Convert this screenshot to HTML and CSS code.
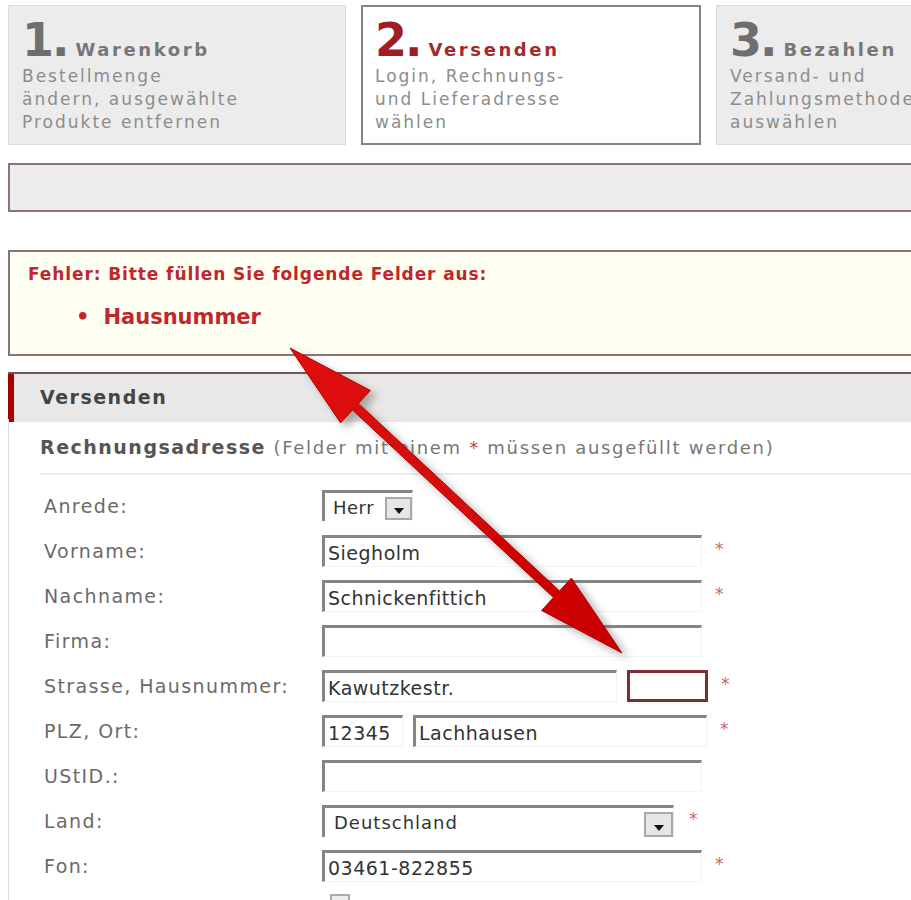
FILE: index.html
```html
<!DOCTYPE html>
<html lang="de">
<head>
    <meta charset="UTF-8">
    <meta name="viewport" content="width=device-width, initial-scale=1.0">
    <title>Versenden</title>
    <link rel="stylesheet" href="styles.css">
</head>
<body>
    <div class="page">
        <div class="steps">
            <div class="step">
                <div class="step-head"><span class="step-num">1.</span><span class="step-title">Warenkorb</span></div>
                <div class="step-desc">Bestellmenge<br>ändern, ausgewählte<br>Produkte entfernen</div>
            </div>
            <div class="step active">
                <div class="step-head"><span class="step-num">2.</span><span class="step-title">Versenden</span></div>
                <div class="step-desc">Login, Rechnungs-<br>und Lieferadresse<br>wählen</div>
            </div>
            <div class="step">
                <div class="step-head"><span class="step-num">3.</span><span class="step-title">Bezahlen</span></div>
                <div class="step-desc">Versand- und<br>Zahlungsmethode<br>auswählen</div>
            </div>
        </div>

        <div class="bar"></div>

        <div class="error">
            <div class="error-title">Fehler: Bitte füllen Sie folgende Felder aus:</div>
            <ul class="error-list">
                <li>Hausnummer</li>
            </ul>
        </div>

        <div class="panel">
            <div class="panel-head">Versenden</div>
            <div class="panel-body">
                <div class="subtitle"><b>Rechnungsadresse</b> (Felder mit einem <span class="req">*</span> müssen ausgefüllt werden)</div>

                <div class="form">
                    <div class="row">
                        <label>Anrede:</label>
                        <div class="select small"><span>Herr</span><span class="select-btn"></span></div>
                    </div>
                    <div class="row">
                        <label>Vorname:</label>
                        <input class="field" type="text" value="Siegholm"><span class="star">*</span>
                    </div>
                    <div class="row">
                        <label>Nachname:</label>
                        <input class="field" type="text" value="Schnickenfittich"><span class="star">*</span>
                    </div>
                    <div class="row">
                        <label>Firma:</label>
                        <input class="field" type="text" value="">
                    </div>
                    <div class="row">
                        <label>Strasse, Hausnummer:</label>
                        <input class="field street" type="text" value="Kawutzkestr.">
                        <input class="field house invalid" type="text" value=""><span class="star">*</span>
                    </div>
                    <div class="row">
                        <label>PLZ, Ort:</label>
                        <input class="field zip" type="text" value="12345">
                        <input class="field city" type="text" value="Lachhausen"><span class="star">*</span>
                    </div>
                    <div class="row">
                        <label>UStID.:</label>
                        <input class="field" type="text" value="">
                    </div>
                    <div class="row">
                        <label>Land:</label>
                        <div class="select wide"><span>Deutschland</span><span class="select-btn"></span></div><span class="star land-star">*</span>
                    </div>
                    <div class="row">
                        <label>Fon:</label>
                        <input class="field" type="text" value="03461-822855"><span class="star">*</span>
                    </div>
                    <div class="row">
                        <label>Lieferadresse:</label>
                        <span class="check"></span>
                    </div>
                </div>
            </div>
        </div>

        <svg class="arrow" width="911" height="900" viewBox="0 0 911 900">
            <defs>
                <filter id="shadow" x="-20%" y="-20%" width="140%" height="140%">
                    <feDropShadow dx="6" dy="5" stdDeviation="4" flood-color="#555" flood-opacity="0.45"/>
                </filter>
                <linearGradient id="red" x1="0" y1="0" x2="1" y2="1">
                    <stop offset="0" stop-color="#e01010"/>
                    <stop offset="1" stop-color="#c80000"/>
                </linearGradient>
            </defs>
            <polygon filter="url(#shadow)" fill="url(#red)" stroke="#b00000" stroke-width="1"
                points="290,348 370.4,390.5 358.5,403.4 559.5,591 571.4,578.1 622,653 541.6,610.5 553.5,597.6 352.5,410 340.6,422.9"/>
        </svg>
    </div>
</body>
</html>
```

FILE: styles.css
```css
body {
    margin: 0;
    background-color: #fff;
    font-family: "DejaVu Sans", Verdana, sans-serif;
    overflow: hidden;
}
.page {
    position: relative;
    width: 1000px;
    padding-left: 8px;
}

/* steps */
.steps {
    display: flex;
    gap: 15px;
    padding-top: 5px;
}
.step {
    flex: none;
    width: 338px;
    height: 140px;
    box-sizing: border-box;
    background-color: #ececec;
    border: 1px solid #dcdcdc;
    padding: 11px 0 0 13px;
}
.step.active {
    width: 340px;
    background-color: #fff;
    border: 2px solid #8e8080;
    padding: 10px 0 0 12px;
}
.step-head {
    display: flex;
    align-items: baseline;
    line-height: 46px;
    height: 46px;
}
.step-num {
    font-size: 46px;
    font-weight: bold;
    color: #6e6e6e;
    letter-spacing: -2px;
    margin-right: 8px;
}
.step-title {
    font-size: 18px;
    font-weight: bold;
    color: #777;
    letter-spacing: 2.6px;
}
.active .step-num {
    color: #a01c22;
}
.active .step-title {
    color: #a52a2a;
}
.step-desc {
    margin-top: 2px;
    font-size: 17px;
    line-height: 23px;
    letter-spacing: 2px;
    color: #8c8c8c;
}

.bar {
    margin-top: 18px;
    height: 49px;
    box-sizing: border-box;
    background-color: #ececec;
    border: 2px solid #8a7373;
}

/* error box */
.error {
    margin-top: 38px;
    height: 106px;
    box-sizing: border-box;
    background-color: #fffff2;
    border: 2px solid #8a7373;
    padding: 12px 0 0 18px;
    color: #c0262c;
    font-weight: bold;
}
.error-title {
    font-size: 17px;
    line-height: 20px;
    letter-spacing: 0.9px;
}
.error-list {
    list-style: none;
    margin: 21px 0 0 0;
    padding: 0 0 0 48px;
}
.error-list li {
    font-size: 21px;
    line-height: 24px;
}
.error-list li::before {
    content: "•";
    margin-right: 14px;
}

/* panel */
.panel {
    margin-top: 16px;
    border-top: 2px solid #6f5a5a;
}
.panel-head {
    height: 48px;
    line-height: 46px;
    background-color: #e8e8e8;
    border-left: 6px solid #a40000;
    padding-left: 26px;
    font-size: 19px;
    font-weight: bold;
    letter-spacing: 1.5px;
    color: #444;
}
.panel-body {
    border-left: 1px solid #dedede;
    margin-top: -3px;
    padding-top: 3px;
}
.subtitle {
    margin-left: 31px;
    height: 51px;
    line-height: 50px;
    border-bottom: 2px solid #eeeeee;
    font-size: 18px;
    letter-spacing: 1.7px;
    color: #777;
}
.subtitle b {
    font-size: 19px;
    letter-spacing: 1.5px;
    color: #555;
}
.req {
    color: #c44;
}

/* form */
.form {
    padding: 8px 0 0 35px;
}
.row {
    display: flex;
    align-items: center;
    height: 45px;
}
.row label {
    width: 278px;
    flex: none;
    white-space: nowrap;
    font-size: 19px;
    letter-spacing: 1.4px;
    color: #6a6a6a;
}
.field {
    width: 380px;
    height: 32px;
    box-sizing: border-box;
    margin: 0;
    padding: 3px 0 0 3px;
    border-top: 3px solid #858585;
    border-left: 3px solid #858585;
    border-right: 1px solid #f2f2f2;
    border-bottom: 1px solid #f4f4f4;
    font-family: "DejaVu Sans", Verdana, sans-serif;
    font-size: 19px;
    letter-spacing: 0.5px;
    color: #333;
    background-color: #fff;
    outline: none;
}
.field.street {
    width: 295px;
}
.field.house {
    width: 81px;
    margin-left: 10px;
}
.field.invalid {
    border: 3px solid #7d2f35;
}
.field.zip {
    width: 81px;
}
.field.city {
    width: 294px;
    margin-left: 10px;
}
.star {
    margin-left: 13px;
    margin-top: -4px;
    font-size: 17px;
    color: #c66;
}
.land-star {
    margin-left: 15px;
}

.select {
    display: flex;
    align-items: center;
    justify-content: space-between;
    height: 31px;
    box-sizing: border-box;
    border-top: 3px solid #858585;
    border-left: 3px solid #858585;
    border-right: 1px solid #eee;
    padding: 0 0 0 8px;
    font-size: 18px;
    letter-spacing: 0.5px;
    color: #333;
}
.select.small {
    width: 91px;
}
.select.wide {
    width: 352px;
    height: 32px;
    padding-left: 9px;
    letter-spacing: 1px;
}
.select-btn {
    position: relative;
    width: 27px;
    height: 23px;
    box-sizing: border-box;
    background-color: #e6e6e6;
    border: 2px solid #a8a8a8;
    margin-top: 2px;
}
.select.wide .select-btn {
    width: 29px;
    height: 25px;
    margin-top: 4px;
}
.select-btn::after {
    content: "";
    position: absolute;
    left: 50%;
    bottom: 4px;
    margin-left: -5px;
    border-left: 5px solid transparent;
    border-right: 5px solid transparent;
    border-top: 6px solid #111;
}
.check {
    display: inline-block;
    width: 20px;
    height: 20px;
    margin-left: 8px;
    margin-top: -14px;
    box-sizing: border-box;
    border: 2px solid #aaa;
    background-color: #eee;
}

.arrow {
    position: absolute;
    top: 0;
    left: 0;
    pointer-events: none;
}
```
